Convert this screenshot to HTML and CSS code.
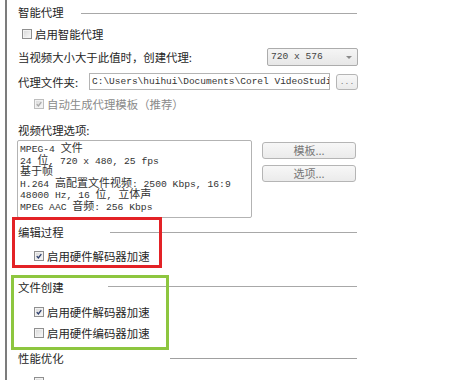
FILE: index.html
```html
<!DOCTYPE html>
<html lang="zh-CN">
  <head>
    <meta charset="UTF-8" />
    <meta name="viewport" content="width=device-width, initial-scale=1.0" />
    <title>智能代理设置</title>
    <link rel="stylesheet" href="styles.css">
  </head>
  <body>
    <div class="panel">
      <div class="group"><span>智能代理</span><i class="rule rule-proxy"></i></div>

      <label class="check first"><span class="box"></span>启用智能代理</label>

      <div class="row size-row">
        <span>当视频大小大于此值时，创建代理:</span>
        <div class="select"><span>720 x 576</span><i class="arrow"></i></div>
      </div>

      <div class="row folder-row">
        <span>代理文件夹:</span>
        <div class="path">C:\Users\huihui\Documents\Corel VideoStudi</div>
        <div class="btn browse">...</div>
      </div>

      <label class="check disabled">
        <span class="box"><svg viewBox="0 0 10 10"><path d="M2.2 5.2 L4.2 7.4 L7.9 2.6" /></svg></span>自动生成代理模板（推荐）
      </label>

      <div class="caption">视频代理选项:</div>
      <div class="options">
        <div class="summary">
          <div>MPEG-4 <span class="zh">文件</span></div>
          <div>24 <span class="zh">位</span>, 720 x 480, 25 fps</div>
          <div><span class="zh">基于帧</span></div>
          <div>H.264 <span class="zh">高配置文件视频</span>: 2500 Kbps, 16:9</div>
          <div>48000 Hz, 16 <span class="zh">位</span>, <span class="zh">立体声</span></div>
          <div>MPEG AAC <span class="zh">音频</span>: 256 Kbps</div>
        </div>
        <div class="option-buttons">
          <div class="btn">模板...</div>
          <div class="btn">选项...</div>
        </div>
      </div>

      <!-- 编辑过程 (红框标注) -->
      <div class="section edit">
        <div class="group"><span>编辑过程</span><i class="rule rule-edit"></i></div>
        <label class="check">
          <span class="box"><svg viewBox="0 0 10 10"><path d="M2.2 5.2 L4.2 7.4 L7.9 2.6" /></svg></span>启用硬件解码器加速
        </label>
        <div class="mark mark-red"></div>
      </div>

      <!-- 文件创建 (绿框标注) -->
      <div class="section create">
        <div class="group"><span>文件创建</span><i class="rule rule-create"></i></div>
        <label class="check">
          <span class="box"><svg viewBox="0 0 10 10"><path d="M2.2 5.2 L4.2 7.4 L7.9 2.6" /></svg></span>启用硬件解码器加速
        </label>
        <label class="check tight"><span class="box"></span>启用硬件编码器加速</label>
        <div class="mark mark-green"></div>
      </div>

      <div class="group perf"><span>性能优化</span></div>
      <div class="check last"><span class="box"></span></div>
    </div>
  </body>
</html>
```

FILE: styles.css
```css
html,
body {
  margin: 0;
  background: #fff;
  overflow: hidden;
}

body {
  font-family: "Noto Sans CJK SC", "Noto Sans", sans-serif;
  font-size: 11.4px;
  line-height: 16px;
  color: #262626;
}

.panel {
  margin-left: 5px;
  border-left: 2px solid #7c7c7c;
  padding-left: 11px;
  width: 340px;
  height: 380px;
  overflow: hidden;
}

/* section titles with a line on the right */
.group {
  display: flex;
  height: 16px;
  margin-top: 4px;
}

.rule {
  display: block;
  flex: none;
  height: 1px;
  background: #a8a8a8;
  margin: 8px 1px 0 auto;
}

.rule-proxy {
  width: 276px;
  margin-top: 9px;
}

.rule-edit {
  width: 247px;
}

.rule-create {
  width: 249px;
  margin-top: 7px;
}

/* the last title draws its line as a background */
.group.perf {
  margin-top: 0;
  background: linear-gradient(#a0a0a0, #a0a0a0) no-repeat;
  background-size: 187px 1px;
  background-position: 152px 8px;
}

/* checkboxes */
.check {
  display: flex;
  align-items: center;
  height: 16px;
  margin-top: 6px;
  padding-left: 16px;
}

.check.first {
  padding-left: 4px;
}

.check.disabled {
  color: #8a8a8a;
}

.box {
  width: 10px;
  height: 10px;
  box-sizing: border-box;
  border: 1px solid #8f8f8f;
  background: linear-gradient(135deg, #d6d6d6, #fafafa);
  box-shadow: inset 0 0 0 1px #f2f2f2;
  margin-right: 3px;
  flex: none;
}

.box svg {
  display: block;
  width: 8px;
  height: 8px;
}

.box path {
  fill: none;
  stroke: #2d3f6e;
  stroke-width: 1.7;
}

.disabled .box {
  border-color: #bdbdbd;
}

.disabled .box path {
  stroke: #a9a9a9;
}

/* rows */
.row {
  display: flex;
  align-items: center;
}

.size-row {
  margin-top: 6px;
  height: 18px;
}

.select {
  margin-left: auto;
  width: 91px;
  height: 18px;
  box-sizing: border-box;
  border: 1px solid #acacac;
  border-radius: 2px;
  background: linear-gradient(#f5f5f5, #e7e7e7);
  display: flex;
  align-items: center;
  justify-content: space-between;
  padding-left: 3px;
  font-family: "Liberation Mono", monospace;
  font-size: 9.6px;
  color: #444;
}

.arrow {
  border-left: 3px solid transparent;
  border-right: 3px solid transparent;
  border-top: 3px solid #8a8a8a;
  margin-right: 5px;
}

.folder-row {
  margin-top: 7px;
  height: 17px;
}

.path {
  margin-left: auto;
  width: 241px;
  height: 17px;
  box-sizing: border-box;
  border: 1px solid #b4b4b4;
  padding-left: 2px;
  overflow: hidden;
  white-space: nowrap;
  font-family: "Liberation Mono", monospace;
  font-size: 9.5px;
  line-height: 15px;
  color: #333;
}

.btn {
  box-sizing: border-box;
  border: 1px solid #b5b5b5;
  border-radius: 3px;
  background: linear-gradient(#f7f7f7, #ebebeb);
  color: #777;
  text-align: center;
  line-height: 14px;
}

.browse {
  margin-left: 6px;
  width: 22px;
  height: 16px;
  font-family: "Liberation Mono", monospace;
  font-size: 8px;
  line-height: 13px;
}

.caption {
  margin-top: 10px;
  height: 16px;
}

/* proxy options */
.options {
  display: flex;
  margin-top: 2px;
}

.summary {
  width: 235px;
  height: 78px;
  box-sizing: border-box;
  margin-left: -1px;
  border: 1px solid #b3b3b3;
  border-radius: 2px;
  padding: 1px 0 0 2px;
  overflow: hidden;
  white-space: nowrap;
  font-family: "Liberation Mono", monospace;
  font-size: 9.7px;
  color: #333;
}

.summary div {
  height: 11.6px;
  line-height: 11.6px;
}

.summary .zh {
  font-family: "Noto Sans CJK SC", sans-serif;
  font-size: 11px;
  line-height: 11px;
}

.option-buttons {
  margin-left: 10px;
  padding-top: 2px;
  display: flex;
  flex-direction: column;
  gap: 6px;
}

.option-buttons .btn {
  width: 94px;
  height: 17px;
  font-size: 11px;
}

/* annotated sections */
.section {
  position: relative;
}

.edit {
  padding: 2px 0 5px;
}

.edit .check {
  margin-top: 8px;
}

.create {
  padding: 6px 0 9px;
}

.create .check {
  margin-top: 9px;
}

.create .check.tight {
  margin-top: 5px;
}

.mark {
  position: absolute;
  box-sizing: border-box;
  border: 3px solid;
}

.mark-red {
  border-color: #e32226;
  left: -6px;
  top: -1px;
  width: 150px;
  height: 51px;
}

.mark-green {
  border-color: #8dc63f;
  left: -7px;
  top: 6px;
  width: 158px;
  height: 75px;
}

.check.last {
  margin-top: 11px;
  align-items: flex-start;
}
```
